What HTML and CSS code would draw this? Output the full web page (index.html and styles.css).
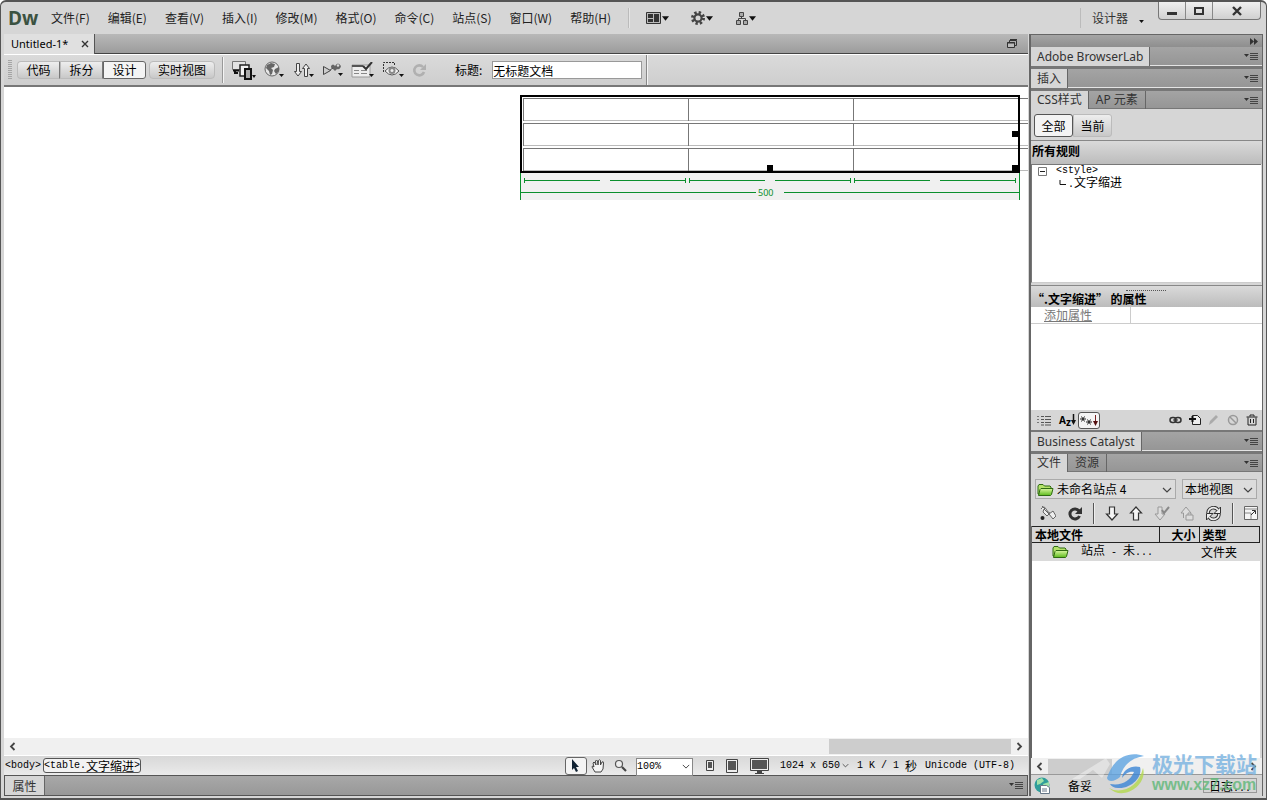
FILE: index.html
```html
<!DOCTYPE html>
<html lang="zh-CN">
<head>
<meta charset="utf-8">
<title>Untitled-1* - Dw</title>
<link rel="stylesheet" href="styles.css">
</head>
<body>
<svg class="defs" aria-hidden="true">
  <symbol id="menu-lines" viewBox="0 0 14 10"><path d="M0 2h5L2.500 5z" fill="#333"/><path d="M6 1.500h8M6 3.500h8M6 5.500h8M6 7.500h8" stroke="#444"/></symbol>
  <symbol id="caret" viewBox="0 0 8 5"><path d="M0 0h8L4 5z" fill="#111"/></symbol>
  <symbol id="chev" viewBox="0 0 10 6"><path d="M1 1l4 4 4-4" fill="none" stroke="#444" stroke-width="1.200"/></symbol>
  <symbol id="left" viewBox="0 0 7 9"><path d="M5.500 1L2 4.500 5.500 8" fill="none" stroke="#444" stroke-width="1.800"/></symbol>
  <symbol id="right" viewBox="0 0 7 9"><path d="M1.500 1L5 4.500 1.500 8" fill="none" stroke="#444" stroke-width="1.800"/></symbol>
  <linearGradient id="fg" x2="0" y2="1"><stop stop-color="#d9f7a0"/><stop offset="1" stop-color="#5cba1c"/></linearGradient>
  <symbol id="folder" viewBox="0 0 17 14"><path d="M1 11V3l1-1.500h4L7.500 3H13l1 1v7z" fill="#b5e36a" stroke="#2f6b12"/><path d="M1.500 12.500L3 6.500l1-1h12l-1.500 6-1 1z" fill="url(#fg)" stroke="#2f6b12"/></symbol>
</svg>
<div class="app">
  <header class="menubar">
    <strong class="brand">Dw</strong>
    <nav class="menus">
      <button>文件(F)</button><button>编辑(E)</button><button>查看(V)</button><button>插入(I)</button><button>修改(M)</button><button>格式(O)</button><button>命令(C)</button><button>站点(S)</button><button>窗口(W)</button><button>帮助(H)</button>
    </nav>
    <div class="tools">
      <button aria-label="布局"><svg width="15" height="12" viewBox="0 0 15 12"><path d="M.5.500h14v11H.500z" fill="#bbb" stroke="#333"/><path d="M2 2h5v4H2zM2 7h5v3H2zM8 2h5v8H8z" fill="#333"/></svg><svg width="7" height="5"><use href="#caret"/></svg></button>
      <button aria-label="扩展"><svg width="14" height="14" viewBox="0 0 14 14"><circle cx="7" cy="7" r="5.500" fill="none" stroke="#444" stroke-width="3" stroke-dasharray="2.300 2.020"/><circle cx="7" cy="7" r="3.600" fill="none" stroke="#444" stroke-width="2.200"/></svg><svg width="7" height="5"><use href="#caret"/></svg></button>
      <button aria-label="站点"><svg width="13" height="14" viewBox="0 0 13 14"><path d="M4.500 1.500h4v4h-4zM1.500 9.500h4v4h-4zM8.500 9.500h4v4h-4z" fill="#aaa" stroke="#444"/><path d="M6.500 6v2M3.500 9V7.500h7V9" fill="none" stroke="#444"/></svg><svg width="7" height="5"><use href="#caret"/></svg></button>
    </div>
    <button class="workspace">设计器 <svg width="5" height="3"><use href="#caret"/></svg></button>
    <div class="winctl">
      <button aria-label="最小化"><svg width="12" height="12" viewBox="0 0 12 12"><path d="M1 7h10v3H1z" fill="#333"/></svg></button>
      <button aria-label="最大化"><svg width="12" height="12" viewBox="0 0 12 12"><path d="M2 3h8v6H2z" fill="none" stroke="#333" stroke-width="2"/></svg></button>
      <button class="close" aria-label="关闭"><svg width="12" height="12" viewBox="0 0 12 12"><path d="M2 2l8 8M10 2l-8 8" stroke="#333" stroke-width="2.400"/></svg></button>
    </div>
  </header>

  <div class="body">
    <main class="editor">
      <div class="doctabs">
        <div class="doctab"><span>Untitled-1*</span><button aria-label="关闭"><svg width="8" height="8" viewBox="0 0 8 8"><path d="M1 1l6 6M7 1L1 7" stroke="#333" stroke-width="1.400"/></svg></button></div>
        <svg class="restore" width="10" height="9" viewBox="0 0 10 9"><path d="M2.500 3V1.500h7v5H8M3 .500h7" fill="none" stroke="#333"/><path d="M.5 3.500h7v5H.500z" fill="#bbb" stroke="#333"/><path d="M0 4h8" stroke="#333"/></svg>
      </div>
      <div class="toolbar">
        <i class="grip"></i>
        <div class="seg"><button>代码</button><button>拆分</button><button class="on">设计</button></div>
        <button class="live">实时视图</button>
        <div class="icons">
          <button aria-label="多屏幕"><svg width="24" height="19" viewBox="0 0 24 19"><path d="M.5.500h13v8H.500z" fill="#e4e4e4" stroke="#777"/><path d="M1 9.500h6M3 9v3h3" fill="none" stroke="#111" stroke-width="2"/><path d="M8 4h9v11H8z" fill="#f2f2f2" stroke="#222" stroke-width="1.500"/><path d="M13 8h6v10h-6z" fill="#aaa" stroke="#111" stroke-width="2"/><path d="M20 14h4l-2 3z" fill="#111"/></svg></button>
          <button aria-label="预览"><svg width="21" height="18" viewBox="0 0 21 18"><circle cx="8" cy="8" r="7" fill="#e6e6e6" stroke="#666"/><path d="M3 4l4-2 4 1-1 3-3 1 2 2-1 4-2 1-1-4-3-3zM11 8l4-2v4l-3 3-2-3z" fill="#666"/><path d="M15 13h5l-2.500 3z" fill="#111"/></svg></button>
          <button aria-label="文件管理"><svg width="21" height="17" viewBox="0 0 21 17"><path d="M3.500 1.500h3v8h2L5 14 1.500 9.500h2zM11.500 14.500h3v-8h2L13 2 9.500 6.500h2z" fill="#eee" stroke="#444"/><path d="M16 12h5l-2.500 3z" fill="#111"/></svg></button>
          <button aria-label="验证"><svg width="21" height="16" viewBox="0 0 21 16"><path d="M1.500 4.500l7 4-7 4z" fill="#ccc" stroke="#444"/><path d="M9 4q2-3 4 0 3-5 6 0-1 4-4 3l-2 2-2-2q-2 0-2-3z" fill="#666"/><circle cx="16" cy="3.500" r="1.200" fill="#ddd"/><path d="M8 8l3-2" stroke="#555"/><path d="M16 11h5l-2.500 3z" fill="#111"/></svg></button>
          <button aria-label="检查浏览器"><svg width="23" height="17" viewBox="0 0 23 17"><path d="M1 3h18v12H1z" fill="#eee" stroke="#999"/><path d="M1 4h11" stroke="#555" stroke-width="2"/><path d="M3 8.500h5M3 11.500h5M10 8.500h6M10 11.500h6" stroke="#888"/><path d="M12 4l3 3 6-7" fill="none" stroke="#333" stroke-width="2"/><path d="M18 12h5l-2.500 3z" fill="#111"/></svg></button>
          <button aria-label="可视化助理"><svg width="22" height="18" viewBox="0 0 22 18"><path d="M1.500 11V1.500h11V4" fill="none" stroke="#333" stroke-dasharray="2 1"/><path d="M3 10q7-8 14 0-7 8-14 0z" fill="#f5f5f5" stroke="#555"/><circle cx="10" cy="9.500" r="3.500" fill="#888"/><circle cx="10" cy="9.500" r="1.500" fill="#eee"/><path d="M17 13h5l-2.500 3z" fill="#111"/></svg></button>
          <button aria-label="刷新"><svg width="15" height="15" viewBox="0 0 15 15"><path d="M11 4A5 5 0 1 0 12 9" fill="none" stroke="#b0b0b0" stroke-width="2.600"/><path d="M14 1v6H8z" fill="#b0b0b0"/></svg></button>
        </div>
        <label class="doctitle">标题: <input value="无标题文档"></label>
      </div>

      <div class="canvas">
        <div class="stage">
          <table class="grid"><tbody><tr><td></td><td></td><td></td></tr><tr><td></td><td></td><td></td></tr><tr><td></td><td></td><td></td></tr></tbody></table>
          <div class="frame"><i class="h e"></i><i class="h s"></i><i class="h se"></i></div>
          <div class="rulers">
            <div class="cols"><span><i></i><i></i></span><span><i></i><i></i></span><span><i></i><i></i></span></div>
            <div class="total"><i></i><b>500</b><i></i></div>
          </div>
        </div>
      </div>
      <div class="hscroll"><button aria-label="向左"><svg width="7" height="9"><use href="#left"/></svg></button><div class="track"><div class="thumb main-thumb"></div></div><button aria-label="向右"><svg width="7" height="9"><use href="#right"/></svg></button></div>
      <div class="status">
        <div class="path"><button class="mono">&lt;body&gt;</button><button class="tag"><span class="mono">&lt;table.</span>文字缩进<span class="mono">&gt;</span></button></div>
        <button class="picked" aria-label="选取"><svg width="9" height="13" viewBox="0 0 9 13"><path d="M1 0l7 8H5l2 4-2 1-2-4-2 2z" fill="#123"/></svg></button>
        <button class="hand" aria-label="手形"><svg width="14" height="14" viewBox="0 0 14 14"><path d="M4 13L1 8q0-2 2 0L2 4q1-2 2 0l1 2-.5-4q1-2 2 0L7 6l.5-4.500q1-1.500 2 0V6L11 3q1.500-1 1.500 1L12 10l-2 3z" fill="#f5f5f5" stroke="#444"/></svg></button>
        <button class="lens" aria-label="缩放"><svg width="13" height="13" viewBox="0 0 13 13"><circle cx="5" cy="5" r="3.500" fill="#eee" stroke="#555" stroke-width="1.200"/><path d="M8 8l4 4" stroke="#444" stroke-width="2.200"/></svg></button>
        <div class="zoom"><select class="mono" aria-label="缩放比例"><option>100%</option></select><svg width="8" height="5"><use href="#chev"/></svg></div>
        <svg class="dev1" width="8" height="11" viewBox="0 0 8 11"><path d="M.5.500h7v10h-7z" fill="#eee" stroke="#444"/><path d="M2 2h4v6H2z" fill="#555"/></svg>
        <svg class="dev2" width="12" height="14" viewBox="0 0 12 14"><path d="M.5.500h11v13H.500z" fill="#eee" stroke="#444"/><path d="M2 2h8v9H2z" fill="#555"/></svg>
        <svg class="dev3" width="19" height="16" viewBox="0 0 19 16"><path d="M.5.500h18v12H.500z" fill="#eee" stroke="#444"/><path d="M2 2h15v9H2z" fill="#555"/><path d="M7 13h5v2h2v1H5v-1h2z" fill="#444"/></svg>
        <span class="mono">1024 x 650</span><svg class="sizechev" width="7" height="5"><use href="#chev"/></svg>
        <span class="load"><span class="mono">1 K / 1 </span>秒</span><span class="mono enc">Unicode (UTF-8)</span>
      </div>
      <div class="prop-panel"><button>属性</button><svg width="14" height="10"><use href="#menu-lines"/></svg></div>
    </main>

    <aside class="dock">
      <div class="dockhead"><svg width="8" height="7" viewBox="0 0 8 7"><path d="M0 0l4 3.500L0 7zM4 0l4 3.500L4 7z" fill="#333"/></svg></div>
      <div class="tabs"><button class="on">Adobe BrowserLab</button><svg width="14" height="10"><use href="#menu-lines"/></svg></div>
      <div class="tabs"><button class="on">插入</button><svg width="14" height="10"><use href="#menu-lines"/></svg></div>
      <div class="tabs open"><button class="on">CSS样式</button><button>AP 元素</button><svg width="14" height="10"><use href="#menu-lines"/></svg></div>
      <section class="css">
        <div class="modes"><button class="on">全部</button><button>当前</button></div>
        <h2>所有规则</h2>
        <div class="tree">
          <div class="node"><svg width="9" height="9" viewBox="0 0 9 9"><path d="M.5.500h8v8h-8z" fill="#fff" stroke="#777"/><path d="M2 4.500h5" stroke="#222"/></svg><span class="mono">&lt;style&gt;</span></div>
          <div class="leaf"><svg width="7" height="6" viewBox="0 0 7 6"><path d="M1 0v4.500h6" fill="none" stroke="#111"/></svg><span><span class="mono">.</span>文字缩进</span></div>
        </div>
        <h2 class="props"><i></i>“.文字缩进” 的属性</h2>
        <div class="prop"><a href="#add">添加属性</a><span></span></div>
        <div class="blank"></div>
        <div class="cssbar">
          <button aria-label="类别视图"><svg width="16" height="12" viewBox="0 0 16 12"><path d="M1 2.500h2M1 5.500h2M1 8.500h2" stroke="#777"/><path d="M5 2.500h3M5 5.500h3M5 8.500h3M5 11h3M9 2.500h6M9 5.500h6M9 8.500h6M9 11h6" stroke="#555"/></svg></button>
          <button aria-label="列表视图" class="az">A<sub>z</sub><svg width="5" height="12" viewBox="0 0 5 12"><path d="M2.500 0v9" stroke="#111" stroke-width="1.500"/><path d="M0 6h5l-2.500 5z" fill="#111"/></svg></button>
          <button aria-label="只显示设置属性" class="set"><svg width="20" height="13" viewBox="0 0 20 13"><path d="M1 5h6M2.500 2.500l3 5M5.500 2.500l-3 5M7 8h6M8.500 5.500l3 5M11.500 5.500l-3 5" stroke="#222"/><path d="M16.500 1v8" stroke="#722"/><path d="M14 7h5l-2.500 5z" fill="#511"/></svg></button>
          <span class="space"></span>
          <svg width="13" height="8" viewBox="0 0 13 8"><rect x="1" y="1.500" width="6" height="5" rx="2.500" fill="none" stroke="#333" stroke-width="1.500"/><rect x="6" y="1.500" width="6" height="5" rx="2.500" fill="none" stroke="#333" stroke-width="1.500"/><path d="M4 4h5" stroke="#333"/></svg>
          <svg width="12" height="12" viewBox="0 0 12 12"><path d="M3.500 1.500h5l3 3v6h-8z" fill="#eee" stroke="#222"/><path d="M0 5h7M3.500 2v6" stroke="#111" stroke-width="2"/></svg>
          <svg width="12" height="12" viewBox="0 0 12 12"><path d="M1 11l1-4 6-6 2 2-6 6z" fill="#aaa"/></svg>
          <svg width="12" height="12" viewBox="0 0 12 12"><circle cx="6" cy="6" r="4.500" fill="none" stroke="#999" stroke-width="1.500"/><path d="M3 3l6 6" stroke="#999" stroke-width="1.500"/></svg>
          <svg width="12" height="12" viewBox="0 0 12 12"><path d="M.5 3h11M4 2.500V1h4v1.500M2 3.500v7.500h8V3.500M4.500 5v4M7.500 5v4" fill="none" stroke="#222"/></svg>
        </div>
      </section>
      <div class="tabs"><button class="on">Business Catalyst</button><svg width="14" height="10"><use href="#menu-lines"/></svg></div>
      <div class="tabs open"><button class="on">文件</button><button>资源</button><svg width="14" height="10"><use href="#menu-lines"/></svg></div>
      <section class="files">
        <div class="picks">
          <div class="pick site"><svg class="fold" width="17" height="14"><use href="#folder"/></svg><select aria-label="站点"><option>未命名站点 4</option></select><svg class="ch" width="10" height="6"><use href="#chev"/></svg></div>
          <div class="pick view"><select aria-label="视图"><option>本地视图</option></select><svg class="ch" width="10" height="6"><use href="#chev"/></svg></div>
        </div>
        <div class="filebar">
          <button aria-label="连接"><svg width="16" height="16" viewBox="0 0 16 16"><path d="M2 1l3 3M1 4q3-4 5 0t4 4M9 9l4-3 3 5-3 3zM4 4l5 5-2 2-4-4z" fill="#eee" stroke="#666"/><circle cx="2.500" cy="13" r="2" fill="#222"/></svg></button>
          <button aria-label="刷新"><svg width="16" height="15" viewBox="0 0 16 15"><path d="M12 5A5 5 0 1 0 12.500 10" fill="none" stroke="#333" stroke-width="3"/><path d="M15 1v7H8z" fill="#333"/></svg></button>
          <i></i>
          <button aria-label="获取"><svg width="14" height="15" viewBox="0 0 14 15"><path d="M4.500 1v7H1.500L7 14l5.500-6h-3V1z" fill="#f5f5f5" stroke="#333" stroke-width="1.200"/></svg></button>
          <button aria-label="上传"><svg width="14" height="15" viewBox="0 0 14 15"><path d="M4.500 14V7H1.500L7 1l5.500 6h-3v7z" fill="#f5f5f5" stroke="#333" stroke-width="1.200"/></svg></button>
          <button aria-label="取出"><svg width="16" height="15" viewBox="0 0 16 15"><path d="M4 1v7H1l5 6 5-6H8V1z" fill="#ddd" stroke="#999"/><path d="M8 4l2 3 5-6" fill="none" stroke="#888" stroke-width="2"/></svg></button>
          <button aria-label="存回"><svg width="14" height="15" viewBox="0 0 14 15"><path d="M3.500 12V7H1l5-6 5 6" fill="#ddd" stroke="#999"/><path d="M6 9h7v5H6zM8 9V7h3v2" fill="#ddd" stroke="#999"/></svg></button>
          <button aria-label="同步"><svg width="17" height="15" viewBox="0 0 17 15"><path d="M3 7a5.500 5.500 0 0 1 10-3M14 8a5.500 5.500 0 0 1-10 3" fill="none" stroke="#333" stroke-width="3.600"/><path d="M15.500 1v6.500H9zM1.500 14V7.500H8z" fill="#eee" stroke="#333"/><path d="M3 7a5.500 5.500 0 0 1 10-3M14 8a5.500 5.500 0 0 1-10 3" fill="none" stroke="#eee" stroke-width="1.600"/></svg></button>
          <i></i>
          <button aria-label="展开"><svg width="14" height="14" viewBox="0 0 14 14"><path d="M.5.500h13v13H.500z" fill="#f5f5f5" stroke="#666"/><path d="M1 3h12M1 7h6v6" fill="none" stroke="#888"/><path d="M7 9l4-4M8 4.500h3.500V8" fill="none" stroke="#333"/></svg></button>
        </div>
        <div class="filelist">
          <table><thead><tr><th class="c1">本地文件</th><th class="c2">大小</th><th>类型</th></tr></thead>
          <tbody><tr><td><div class="entry"><svg width="17" height="14"><use href="#folder"/></svg><span>站点<span class="mono"> - </span>未<span class="mono">...</span></span></div></td><td></td><td>文件夹</td></tr></tbody></table>
        </div>
        <div class="hscroll"><button aria-label="向左"><svg width="7" height="9"><use href="#left"/></svg></button><div class="track"><div class="thumb file-thumb"></div></div><button aria-label="向右"><svg width="7" height="9"><use href="#right"/></svg></button></div>
        <div class="ready"><svg width="17" height="17" viewBox="0 0 17 17"><circle cx="8" cy="8" r="7.500" fill="#2f9d9a"/><path d="M3 3l5-2 2 3-4 3-3 1zM9 7l6-2v5l-4 3z" fill="#9fe0a8"/><path d="M6.500 8.500h6l3 2v6h-9z" fill="#fff" stroke="#678"/><path d="M8 12h5M8 14h5" stroke="#678"/></svg><span>备妥</span><button>日志<span class="mono">...</span></button></div>
      </section>
      <div class="watermark">
        <svg width="80" height="44" viewBox="0 0 80 44"><path d="M0 28L34 7l4 6-8 14-9-8-13 9z" fill="#fff" opacity=".5"/><path d="M72 5C54-1 40 10 35 27c1 5 9 3 13-1C51 14 59 7 72 5z" fill="#5fa4e2"/><path d="M38 33c12 2 20-3 24-12-5-1-9 2-12 6 1-9 10-13 18-11 3 10-9 22-22 21-4 0-7-2-8-4z" fill="#3b86d6"/><path d="M37 37c12 7 30-1 34-20 5 17-20 34-34 20z" fill="#b4d94f"/></svg>
        <div><b>极光下载站</b><em>www.xz7.com</em></div>
      </div>
    </aside>
  </div>
</div>
</body>
</html>
```
FILE: styles.css
```css
* { box-sizing: border-box; }
body { margin: 0; background: #fff; color: #000; font: 12px/16px "Noto Sans CJK SC", sans-serif; }
button, select, input { font: inherit; color: inherit; margin: 0; padding: 0; border: 0; background: none; border-radius: 0; white-space: nowrap; }
svg { display: block; flex: none; }
.defs { position: absolute; width: 0; height: 0; }
.mono { font-family: "Liberation Mono", monospace; font-size: 10px; white-space: pre; }

.app { height: 100vh; display: flex; flex-direction: column; background: #d6d6d6; border: 1px solid #555; border-top-width: 2px; border-bottom-width: 2px; border-radius: 6px 6px 0 0; padding: 0 3px 2px; overflow: hidden; }
.menubar { display: flex; height: 32px; align-items: center; color: #222; flex: none; }
.brand { width: 47px; padding-left: 4px; font: bold 19px/28px "Open Sans", sans-serif; color: #3b5241; }
.menus { display: flex; gap: 18px; }
.tools { display: flex; gap: 22px; margin-left: 17px; border-left: 1px solid #bbb; box-shadow: inset 1px 0 #e5e5e5; padding-left: 17px; height: 20px; }
.tools button { display: flex; align-items: center; gap: 1px; }
.workspace { margin-left: auto; display: flex; align-items: center; gap: 11px; padding: 0 14px 0 11px; border-left: 1px solid #bbb; height: 20px; color: #333; }
.workspace svg { margin-top: 6px; }
.winctl { display: flex; align-self: flex-start; height: 18px; margin-right: 2px; border: 1px solid #777; border-top: 0; border-radius: 0 0 4px 4px; background: linear-gradient(#f0f0f0, #d0d0d0); }
.winctl button { width: 27px; display: grid; place-items: center; border-right: 1px solid #888; }
.winctl .close { width: 47px; border: 0; }

.body { flex: 1; min-height: 0; display: flex; }
.editor { flex: 1; min-width: 0; display: flex; flex-direction: column; }
.doctabs { height: 20px; flex: none; display: flex; justify-content: space-between; background: linear-gradient(#b8b8b8, #9c9c9c); border-bottom: 1px solid #444; }
.doctab { display: flex; align-items: center; gap: 13px; background: #e0e0e0; height: 20px; padding: 0 5px 0 7px; border-right: 1px solid #555; font-family: "Noto Sans", sans-serif; font-size: 11px; }
.restore { margin: 5px 11px 0 0; }
.toolbar { height: 33px; flex: none; display: flex; align-items: center; border-top: 1px solid #fff; border-bottom: 2px solid #777; background: linear-gradient(#dadada, #cecece); }
.grip { width: 4px; height: 20px; margin: 0 5px 0 4px; background: repeating-linear-gradient(#999 0 1px, transparent 1px 2px); opacity: .8; }
.seg { display: flex; }
.seg button, .live, .modes button { height: 18px; line-height: 16px; background: linear-gradient(#eee, #c8c8c8); border: 1px solid #bbb; }
.seg button { width: 43px; border-right-color: #777; }
.seg button:first-child { border-radius: 4px 0 0 4px; }
.seg .on { border-color: #666; background: #f4f4f4; border-radius: 0 3px 3px 0; }
.live { margin-left: 3px; width: 66px; border-radius: 4px; }
.icons { display: flex; align-items: center; gap: 8px; margin-left: 7px; padding-left: 9px; border-left: 1px solid #999; box-shadow: inset 1px 0 #f4f4f4; height: 26px; }
.doctitle { display: flex; align-items: center; gap: 10px; height: 30px; margin-left: 28px; padding-right: 4px; border-right: 1px solid #888; box-shadow: 1px 0 #f4f4f4; }
.doctitle input { width: 150px; height: 18px; background: #fff; border: 1px solid #999; }

.canvas { flex: 1; min-height: 0; background: #fff; overflow: hidden; padding-top: 8px; }
.stage { position: relative; width: 508px; margin-left: auto; overflow: hidden; padding-top: 3px; }
.grid { width: 520px; margin-left: 3px; table-layout: fixed; border-collapse: separate; border-spacing: 0; }
.grid td { height: 25px; padding: 0; border-top: 1px solid #777; background: linear-gradient(#777, #777) 0 0 / 1px 22px no-repeat, linear-gradient(#bbb, #bbb) 0 21px / 100% 1px no-repeat; }
.grid td:not(:last-child) { width: 165px; }
.frame { position: absolute; left: 0; top: 0; width: 500px; height: 78px; border: 2px solid #000; }
.h { position: absolute; width: 6px; height: 6px; background: #000; }
.e { right: 0; top: 34px; }
.s { left: 245px; bottom: 0; }
.se { right: 0; bottom: 0; }
.rulers { width: 500px; height: 27px; background: #f0f0f0; border: 1px solid #0a8f2c; border-width: 0 1px; }
.cols { display: flex; gap: 3px; padding: 5px 3px 0; height: 14px; }
.cols span { flex: 1; display: flex; gap: 10px; height: 5px; border: 1px solid #0a8f2c; border-width: 0 1px; align-items: center; }
.cols i, .total i { flex: 1; height: 1px; background: #0a8f2c; }
.total { display: flex; align-items: center; height: 11px; }
.total b { width: 28px; padding-left: 2px; font: 9px/11px "Noto Sans", sans-serif; color: #0a8f2c; }

.hscroll { display: flex; flex: none; height: 17px; background: #f0f0f0; }
.hscroll button { width: 17px; display: grid; place-items: center; }
.track { flex: 1; display: flex; }
.thumb { background: #cdcdcd; height: 15px; margin-top: 1px; }
.main-thumb { width: 182px; margin-left: auto; }
.file-thumb { width: 64px; }
.status { flex: none; height: 20px; display: flex; align-items: center; border-top: 1px solid #fff; background: linear-gradient(#d8d8d8, #eaeaea); }
.path { flex: 1; display: flex; align-items: center; gap: 2px; padding-left: 1px; }
.tag { height: 15px; line-height: 13px; border: 1px solid #555; border-radius: 3px; background: #f2f2f2; display: flex; align-items: center; }
.picked { width: 22px; height: 18px; border: 1px solid #666; border-radius: 3px; background: #f4f4f4; display: grid; place-items: center; }
.hand { margin-left: 4px; }
.lens { margin: 0 9px 0 9px; }
.zoom { position: relative; }
.zoom select { appearance: none; width: 57px; height: 18px; border: 1px solid #888; background: #fff; }
.zoom svg { position: absolute; right: 3px; top: 8px; }
.dev1 { margin-left: 13px; }
.dev2 { margin-left: 12px; }
.dev3 { margin: 0 11px 0 12px; }
.sizechev { margin-left: 2px; }
.load { margin: 0 8px; display: flex; align-items: center; }
.enc { margin-right: 13px; }
.prop-panel { flex: none; display: flex; align-items: center; justify-content: space-between; height: 21px; border: 1px solid #555; background: linear-gradient(#a8a8a8, #989898); padding-right: 4px; }
.prop-panel button { height: 19px; width: 40px; background: #d6d6d6; border-right: 1px solid #666; color: #333; }

.dock { position: relative; flex: none; width: 234px; display: flex; flex-direction: column; border: 1px solid #666; border-width: 1px 1px 0 2px; margin-left: 1px; }
.dockhead { height: 12px; flex: none; background: linear-gradient(#a5a5a5, #8e8e8e); display: flex; justify-content: flex-end; align-items: center; padding-right: 4px; }
.tabs { flex: none; height: 22px; display: flex; align-items: stretch; background: linear-gradient(#a4a4a4, #959595); border-bottom: 3px solid #777; box-shadow: inset 0 -1px #e4e4e4; color: #333; font-family: "Noto Sans", "Noto Sans CJK SC", sans-serif; }
.tabs.open { height: 18px; border-bottom: 0; box-shadow: inset 0 -1px #777; }
.tabs button { padding: 0 7px; border-right: 1px solid #666; }
.tabs button.on { background: #d6d6d6; padding: 0 6px; }
.tabs > svg { margin: 5px 4px 0 auto; }
.css { flex: none; }
.modes { display: flex; padding: 5px 3px 3px; border-bottom: 1px solid #888; height: 32px; }
.modes button { width: 39px; height: 23px; border-radius: 0 3px 3px 0; }
.modes .on { border: 1px solid #555; border-radius: 3px; background: #f4f4f4; }
h2 { margin: 0; height: 23px; padding: 0 1px; font: bold 12px/20px "Noto Sans CJK SC", sans-serif; background: linear-gradient(#dadada, #bcbcbc); }
.tree { background: #fff; height: 119px; margin-right: 1px; border: 1px solid #777; border-width: 1px 0 0 1px; border-bottom: 1px solid #ccc; }
.node { display: flex; align-items: center; height: 12px; gap: 9px; padding-left: 6px; }
.leaf { display: flex; align-items: center; height: 12px; padding-left: 27px; gap: 2px; }
.props { position: relative; margin-top: 2px; padding-top: 3px; height: 22px; border-top: 1px solid #888; }
.props i { position: absolute; top: 4px; left: 95px; width: 40px; border-top: 1px dotted #555; }
.prop { display: flex; height: 17px; background: #fff; border-bottom: 1px solid #ccc; }
.prop a { width: 100px; padding-left: 13px; border-right: 1px solid #ccc; color: #777; }
.blank { height: 86px; background: #fff; }
.cssbar { display: flex; align-items: center; gap: 7px; height: 22px; padding: 0 4px 0 5px; border-bottom: 2px solid #777; }
.az { display: flex; align-items: center; font: bold 10px/12px "Noto Sans", sans-serif; }
.az sub { font-size: 10px; line-height: 12px; padding-top: 3px; }
.set { width: 22px; height: 17px; margin-left: -5px; border: 1px solid #555; border-radius: 3px; background: #f4f4f4; }
.space { flex: 1; }

.files { flex: 1; min-height: 0; display: flex; flex-direction: column; }
.picks { display: flex; gap: 6px; padding: 7px 5px 1px 4px; }
.pick { position: relative; }
.pick select { appearance: none; width: 100%; height: 20px; border: 1px solid #aaa; background: #dcdcdc; padding-left: 2px; }
.site { flex: 1; }
.site select { padding-left: 21px; }
.view { width: 75px; }
.fold { position: absolute; left: 2px; top: 4px; }
.ch { position: absolute; right: 4px; top: 8px; }
.filebar { display: flex; justify-content: space-between; align-items: center; height: 26px; padding: 0 4px 0 9px; }
.filebar i { width: 1px; height: 21px; background: #555; box-shadow: 1px 0 #eee; }
.filelist { flex: 1; background: #fff; border-left: 1px solid #666; margin-right: 2px; }
.filelist table { width: 100%; table-layout: fixed; border-collapse: collapse; line-height: 14px; }
th { text-align: left; height: 16px; padding: 0 3px; background: #d6d6d6; border: 1px solid #222; border-left: 0; }
.c1 { width: 127px; }
.c2 { width: 40px; text-align: right; }
.filelist td { height: 18px; padding: 0 2px; background: #dadada; }
.filelist td:first-child { padding-left: 20px; }
.entry { display: flex; align-items: center; gap: 12px; }
.files .hscroll { border-bottom: 1px solid #999; }
.ready { display: flex; align-items: center; height: 21px; padding: 0 5px 0 3px; gap: 17px; }
.ready button { margin-left: auto; width: 54px; height: 15px; line-height: 13px; border: 1px solid #999; }
.watermark { position: absolute; right: 5px; bottom: 1px; display: flex; align-items: center; opacity: .8; pointer-events: none; }
.watermark div { display: flex; flex-direction: column; }
.watermark b { font: bold 21px/24px "Noto Sans CJK SC", sans-serif; color: #78b2e0; }
.watermark em { font: bold 16px/20px "Liberation Sans", sans-serif; color: #5fb878; }
```
